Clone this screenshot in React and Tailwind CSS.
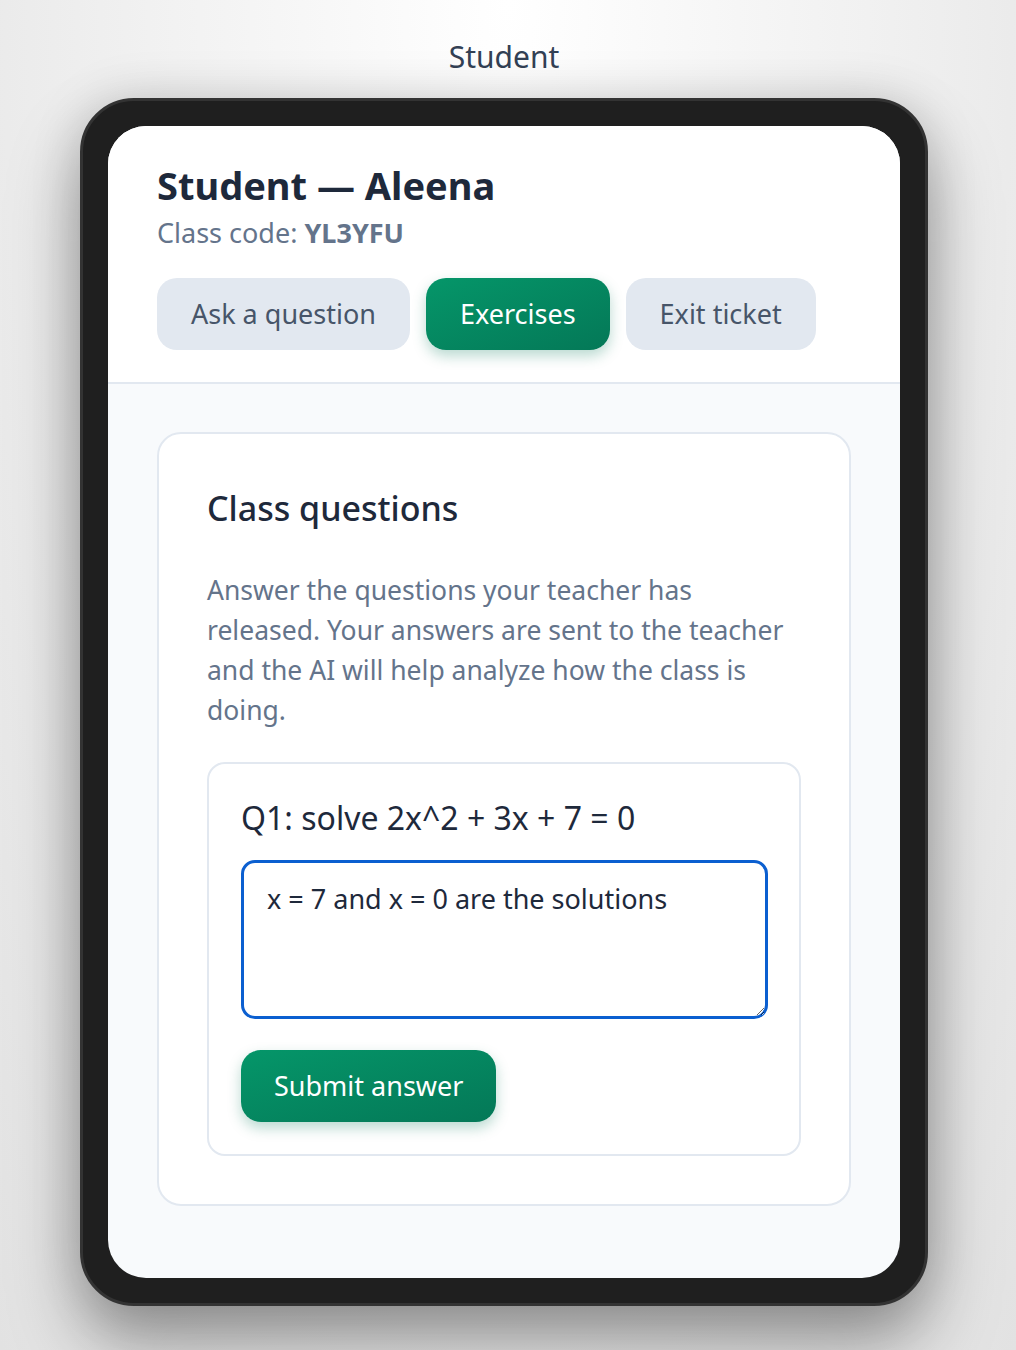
import React from 'react'

const font = { fontFamily: '"Noto Sans", Lato, sans-serif' }

function TabButton({ label, active }) {
  return (
    <button
      className={
        active
          ? 'h-[72px] px-[34px] rounded-[20px] text-[27px] text-white bg-gradient-to-br from-[#059669] to-[#047857] shadow-[0_6px_14px_rgba(4,120,87,0.28)]'
          : 'h-[72px] px-[34px] rounded-[20px] text-[27px] text-[#475569] bg-[#e2e8f0]'
      }
    >
      {label}
    </button>
  )
}

export default function App() {
  return (
    <div
      className="w-[1016px] h-[1350px] overflow-hidden bg-[radial-gradient(ellipse_at_50%_0%,#ffffff_0%,#f1f1f1_50%,#e2e2e2_100%)]"
      style={font}
    >
      <div className="w-[1008px] flex flex-col items-center">
        <div className="mt-[37px] text-[30px] leading-[40px] text-[#334155]">Student</div>

        {/* device frame */}
        <div className="mt-[21px] w-[848px] h-[1208px] rounded-[54px] bg-[#1f1f1f] border-[3px] border-[#333333] p-[25px] shadow-[0_40px_70px_rgba(0,0,0,0.35),0_0_50px_rgba(0,0,0,0.15)]">
          <div className="w-[792px] h-[1152px] rounded-[38px] overflow-hidden bg-[#f8fafc] flex flex-col">
            <header className="bg-white border-b-2 border-[#e2e8f0] px-[49px] pt-[36px] pb-[32px]">
              <h1 className="text-[38px] leading-[46px] font-bold text-[#1e293b]">Student — Aleena</h1>
              <p className="mt-[8px] text-[27px] leading-[34px] text-[#64748b]">
                Class code: <span className="font-bold">YL3YFU</span>
              </p>
              <div className="mt-[28px] flex gap-[16px]">
                <TabButton label="Ask a question" />
                <TabButton label="Exercises" active />
                <TabButton label="Exit ticket" />
              </div>
            </header>

            <main className="px-[49px] pt-[48px]">
              <section className="bg-white border-2 border-[#e2e8f0] rounded-[24px] px-[48px] pt-[52px] pb-[48px]">
                <h2 className="text-[34px] leading-[44px] font-medium text-[#1e293b]">Class questions</h2>
                <p className="mt-[40px] text-[26.5px] leading-[40px] text-[#64748b]">
                  Answer the questions your teacher has released. Your answers are sent to the teacher and the AI will help analyze how the class is doing.
                </p>

                <div className="mt-[32px] border-2 border-[#e2e8f0] rounded-[18px] px-[32px] pt-[34px] pb-[32px]">
                  <div className="text-[32px] leading-[40px] text-[#1e293b]">Q1: solve 2x^2 + 3x + 7 = 0</div>
                  <textarea
                    className="mt-[22px] block w-[527px] h-[159px] rounded-[14px] border-[3px] border-[#0b5fd0] px-[23px] py-[18px] text-[27px] leading-[36px] text-[#1e293b] outline-none resize-y"
                    style={font}
                    defaultValue="x = 7 and x = 0 are the solutions"
                  />
                  <button className="mt-[31px] h-[72px] px-[33px] rounded-[20px] text-[27px] text-white bg-gradient-to-br from-[#059669] to-[#047857] shadow-[0_6px_14px_rgba(4,120,87,0.28)]">
                    Submit answer
                  </button>
                </div>
              </section>
            </main>
          </div>
        </div>
      </div>
    </div>
  )
}
